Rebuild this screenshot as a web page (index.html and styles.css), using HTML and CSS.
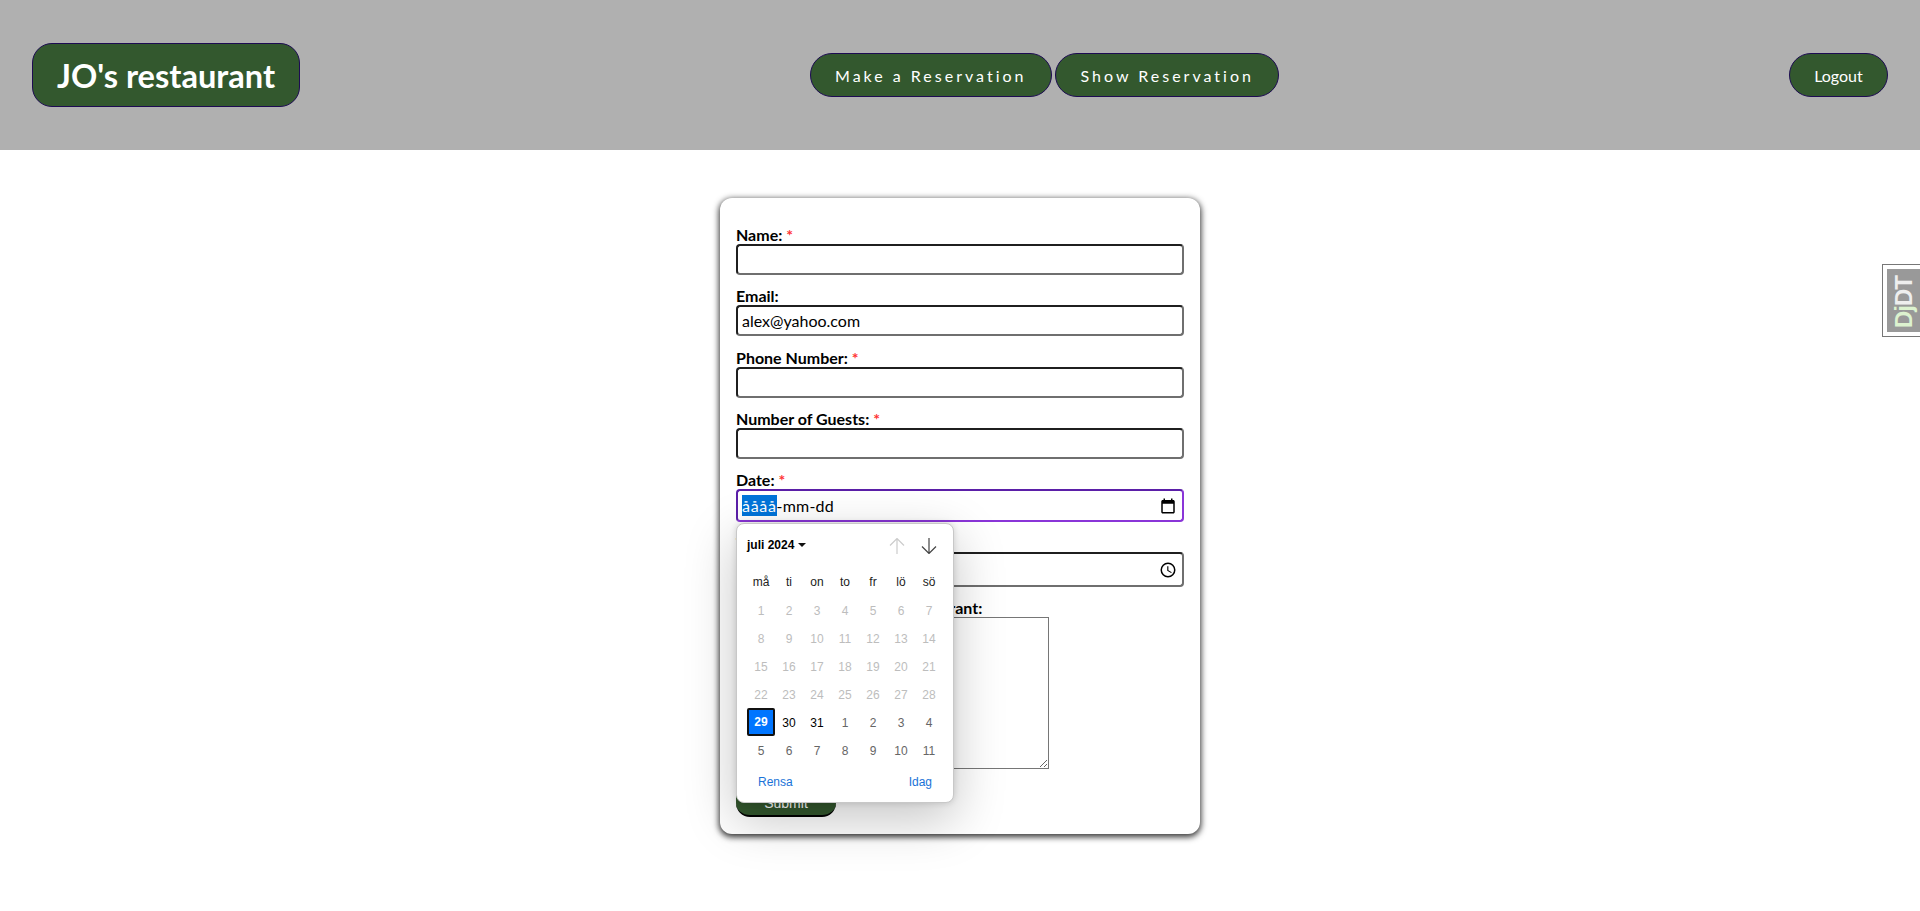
FILE: index.html
```html
<!DOCTYPE html>
<html lang="en">
<head>
<meta charset="utf-8">
<title>JO's restaurant</title>
<link rel="stylesheet" href="styles.css">
</head>
<body>
<header class="topbar">
  <a class="btn brand">JO's restaurant</a>
  <nav class="nav">
    <a class="btn pill spaced">Make a Reservation</a>
    <a class="btn pill spaced">Show Reservation</a>
  </nav>
  <a class="btn pill logout">Logout</a>
</header>
<main class="main">
  <form class="card">
    <div class="field"><label class="label">Name: <span class="req">*</span></label><div class="input"></div></div>
    <div class="field"><label class="label">Email:</label><div class="input">alex@yahoo.com</div></div>
    <div class="field"><label class="label">Phone Number: <span class="req">*</span></label><div class="input"></div></div>
    <div class="field"><label class="label">Number of Guests: <span class="req">*</span></label><div class="input"></div></div>
    <div class="field field-date"><label class="label">Date: <span class="req">*</span></label>
      <div class="input input-focus"><span class="date-text"><span class="sel">åååå</span>-mm-dd</span>
        <svg class="ico" viewBox="0 0 24 24" width="18" height="18"><path d="M19 4h-1V2h-2v2H8V2H6v2H5c-1.100 0-2 .9-2 2v14c0 1.100.9 2 2 2h14c1.100 0 2-.9 2-2V6c0-1.100-.9-2-2-2zm0 16H5V9h14v11z"/></svg>
      </div>
    </div>
    <div class="field field-time"><label class="label">Time: <span class="req">*</span></label>
      <div class="input input-tall"><span></span>
        <svg class="ico" viewBox="0 0 24 24" width="18" height="18"><path d="M12 2a10 10 0 1 0 0 20 10 10 0 0 0 0-20zm0 18a8 8 0 1 1 0-16 8 8 0 0 1 0 16zm.5-13H11v6l5.200 3.100.8-1.200-4.500-2.700V7z"/></svg>
      </div>
    </div>
    <div class="field field-notes"><label class="label label-notes">Special requests for the restaurant:</label><textarea class="notes"></textarea></div>
    <button class="submit" type="button">Submit</button>
  </form>
  <section class="picker">
    <div class="picker-head">
      <span class="month">juli 2024 <i class="caret"></i></span>
      <span class="arrows">
        <svg class="arrow off" viewBox="0 0 16 16" width="16" height="16"><path d="M8 .500v15.500M1 7.500 8 .500l7 7"/></svg>
        <svg class="arrow" viewBox="0 0 16 16" width="16" height="16"><path d="M8 0v15.500M1 8.500l7 7 7-7"/></svg>
      </span>
    </div>
    <div class="grid dow"><span>må</span><span>ti</span><span>on</span><span>to</span><span>fr</span><span>lö</span><span>sö</span></div>
    <div class="grid days off-days"><span>1</span><span>2</span><span>3</span><span>4</span><span>5</span><span>6</span><span>7</span><span>8</span><span>9</span><span>10</span><span>11</span><span>12</span><span>13</span><span>14</span><span>15</span><span>16</span><span>17</span><span>18</span><span>19</span><span>20</span><span>21</span><span>22</span><span>23</span><span>24</span><span>25</span><span>26</span><span>27</span><span>28</span></div>
    <div class="grid days"><span class="today">29</span><span class="cur">30</span><span class="cur">31</span><span>1</span><span>2</span><span>3</span><span>4</span><span>5</span><span>6</span><span>7</span><span>8</span><span>9</span><span>10</span><span>11</span></div>
    <div class="picker-foot"><a>Rensa</a><a>Idag</a></div>
  </section>
</main>
<aside class="djdt"><span class="djdt-text"><b class="dj">Dj</b>DT</span></aside>
</body>
</html>
```

FILE: styles.css
```css
* { box-sizing: border-box; }
html, body { margin: 0; height: 100%; }
body { font-family: Lato, sans-serif; background: #fff; color: #000; height: 911px; overflow: hidden; position: relative; }
.topbar { height: 150px; background: #b0b0b0; display: flex; align-items: center; justify-content: space-between; padding: 0 32px; }
.btn { display: flex; align-items: center; justify-content: center; background: #33582e; color: #fff; border: 1px solid #1d0b52; }
.brand { width: 268px; height: 64px; border-radius: 20px; font-size: 32.6px; font-weight: 700; }
.nav { display: flex; gap: 3px; }
.pill { height: 44px; border-radius: 22px; font-size: 16px; padding: 0 24.5px; }
.spaced { letter-spacing: 3px; }
.logout { width: 99px; padding: 0; }
.main { position: relative; }
.card { position: absolute; left: 720px; top: 48px; width: 480px; height: 636px; background: #fff; border-radius: 12px; box-shadow: 0 2px 6px 1px rgba(0,0,0,.8); padding: 27px 16px 0; }
.field { margin-bottom: 11.33px; }
.label { display: block; font-size: 16px; font-weight: 700; line-height: 19px; color: #000; }
.label-notes { word-spacing: -.4px; }
.req { color: #f33; font-weight: 700; }
.input { height: 31px; border: 2px solid; border-color: #1f1f1f #6f6f6f #6f6f6f #1f1f1f; border-radius: 4px; font-size: 16px; padding: 0 5px 0 4px; display: flex; align-items: center; justify-content: space-between; }
.input-focus { border-color: #5b1fa8 #8a35d8 #8a35d8 #5b1fa8; height: 33px; }
.input-tall { height: 35px; }
.field-date, .field-time { margin-bottom: 11px; }
.date-text { letter-spacing: .2px; }
.sel { display: inline-block; line-height: 21px; background: #0074d9; color: #fff; letter-spacing: .7px; }
.ico { display: block; }
.notes { display: block; width: 313px; height: 152px; border: 1px solid #767676; border-radius: 0; background: #fff; margin: 0; }
.submit { display: block; margin-top: 18px; width: 100px; height: 30px; padding-top: 5px; background: #33582e; color: #fff; border: 0; border-bottom: 2px solid #000; border-radius: 0 0 14px 14px; font-size: 14px; font-family: "Liberation Sans", sans-serif; }
.picker { position: absolute; left: 736px; top: 373px; width: 218px; height: 280px; background: #fff; border: 1px solid #c8c8c8; border-radius: 8px; box-shadow: 0 16px 50px 2px rgba(0,0,0,.22), 0 0 6px rgba(0,0,0,.15); font-family: "Liberation Sans", sans-serif; padding: 0 10px; }
.picker-head { display: flex; align-items: center; justify-content: space-between; height: 42px; }
.month { font-size: 12px; font-weight: 700; display: flex; align-items: center; gap: 4px; margin-top: -1px; }
.caret { display: block; border: 4px solid transparent; border-top: 4px solid #111; border-bottom: 0; }
.arrows { display: flex; gap: 16px; padding-right: 6px; margin-top: 2px; }
.arrow { fill: none; stroke: #444; stroke-width: 1.200; }
.arrow.off { stroke: #ccc; }
.grid { display: grid; grid-template-columns: repeat(7, 28px); }
.grid span { height: 28px; padding-top: 2px; display: flex; align-items: center; justify-content: center; font-size: 12px; }
.dow { margin-top: 1px; margin-bottom: 2px; }
.dow span { height: 27px; padding-top: 2px; font-size: 12px; color: #222; }
.days span { color: #666; }
.off-days span { color: #bdbdbd; }
.days span.cur { color: #000; }
.days span.today { background: #0075ff; color: #fff; font-weight: 700; border: 2px solid #111; border-radius: 2px; padding-top: 0; }
.picker-foot { display: flex; justify-content: space-between; padding: 11px 11px 0 11px; font-size: 12px; color: #1a73d8; }
.djdt { position: absolute; right: 0; top: 264px; width: 38px; height: 73px; background: #fff; border: 1px solid #777; border-right: 0; padding: 4px 0 4px 4px; }
.djdt-text { display: flex; align-items: center; justify-content: center; width: 100%; height: 100%; padding-bottom: 3px; background: #999; color: #eee; font-family: "Liberation Sans", sans-serif; font-weight: 700; font-size: 24px; letter-spacing: -1px; writing-mode: vertical-rl; transform: rotate(180deg); }
.dj { color: #dcf2cf; }
```
